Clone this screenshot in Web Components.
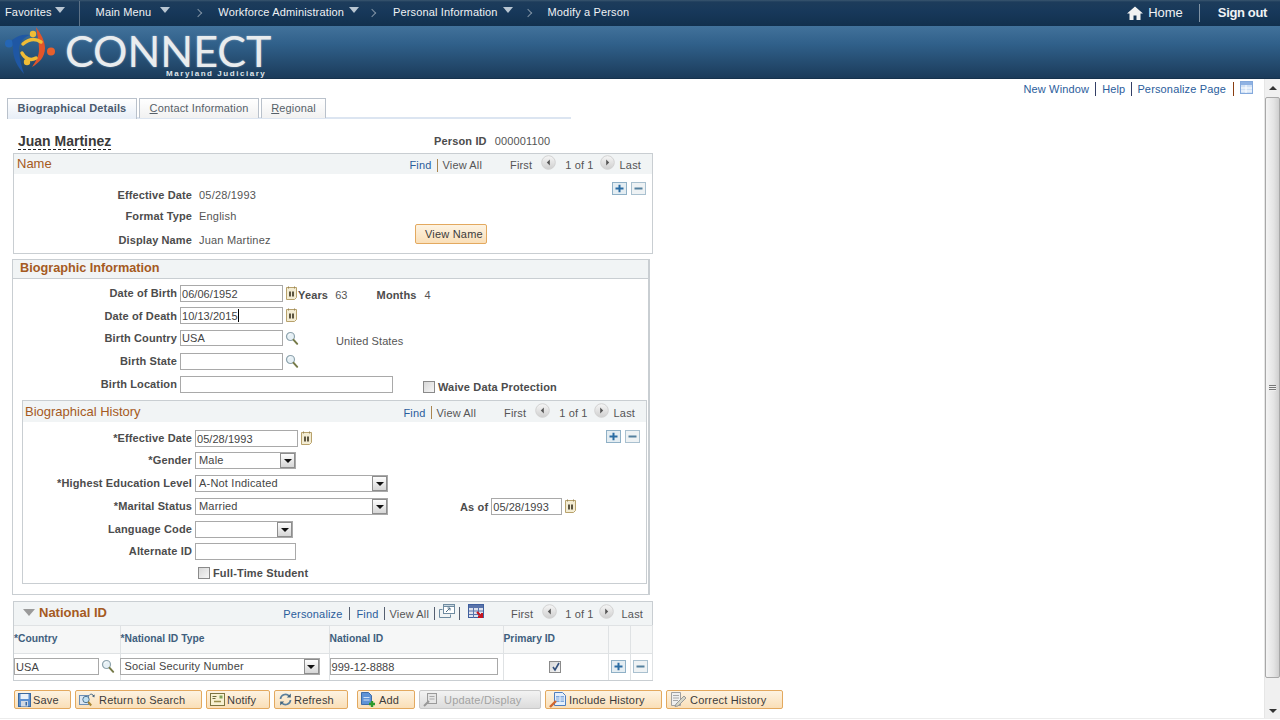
<!DOCTYPE html>
<html lang="en">
<head>
<meta charset="utf-8">
<title>Modify a Person</title>
<style>
  html, body { margin: 0; height: 720px; overflow: hidden; background: #fff; }
  body { font: 11px "Liberation Sans", Arial, sans-serif; color: #4c4c4c; display: flex; flex-direction: column; }
</style>
</head>
<body>
<cx-topnav></cx-topnav>
<cx-banner></cx-banner>
<cx-workspace>
  <cx-pagelinks></cx-pagelinks>
  <cx-tabs></cx-tabs>
  <cx-person name="Juan Martinez" person-id="000001100"></cx-person>

  <cx-group heading="Name" kind="plain" style="margin-left:13px;width:640px;height:101px">
    <cx-pager slot="controls"></cx-pager>
    <cx-namebody></cx-namebody>
  </cx-group>

  <cx-group heading="Biographic Information" kind="strong" style="margin:5px 0 0 12px;width:638px;height:336px">
    <cx-biobody></cx-biobody>
  </cx-group>

  <cx-national></cx-national>
  <cx-toolbar></cx-toolbar>
</cx-workspace>

<script>
// Small svg icons shared by the components
const ICONS = {
    calendar: `<svg width="13" height="15" viewBox="0 0 13 15"><path d="M1.500 1.500h10v10l-2 2h-8z" fill="#f3ecd3" stroke="#b8a26c"/><rect x="3" y="0.500" width="1" height="2" fill="#9a875a"/><rect x="9" y="0.500" width="1" height="2" fill="#9a875a"/><rect x="4" y="5.500" width="2" height="5" fill="#5c5540"/><rect x="7" y="5.500" width="2" height="5" fill="#5c5540"/></svg>`,
    lookup: `<svg width="14" height="15" viewBox="0 0 14 15"><circle cx="5.500" cy="5.500" r="4" fill="#e6f0f5" stroke="#8ea3ad" stroke-width="1.200"/><path d="M3.500 4.500a2.500 2.500 0 0 1 2-1.500" stroke="#fff" fill="none"/><path d="M8.600 8.800l3.600 4" stroke="#767a48" stroke-width="2" stroke-linecap="round"/></svg>`,
    prev: `<svg width="15" height="15" viewBox="0 0 15 15"><defs><linearGradient id="g" x2="0" y2="1"><stop offset="0" stop-color="#f6f6f6"/><stop offset="1" stop-color="#cfcfcf"/></linearGradient></defs><circle cx="7.500" cy="7.500" r="6.800" fill="url(#g)" stroke="#d2d2d2"/><path d="M8.800 4.500v6l-3-3z" fill="#555"/></svg>`,
    next: `<svg width="15" height="15" viewBox="0 0 15 15"><defs><linearGradient id="g2" x2="0" y2="1"><stop offset="0" stop-color="#f6f6f6"/><stop offset="1" stop-color="#cfcfcf"/></linearGradient></defs><circle cx="7.500" cy="7.500" r="6.800" fill="url(#g2)" stroke="#d2d2d2"/><path d="M6.200 4.500v6l3-3z" fill="#555"/></svg>`,
    plus: `<svg width="15" height="13" viewBox="0 0 15 13"><rect x=".5" y=".5" width="14" height="12" fill="#e4edf2" stroke="#8fb0c6"/><path d="M3.500 6.500h8M7.500 2.800v7.400" stroke="#2a6ca3" stroke-width="2"/></svg>`,
    minus: `<svg width="15" height="13" viewBox="0 0 15 13"><rect x=".5" y=".5" width="14" height="12" fill="#eef2f4" stroke="#a9c0cf"/><path d="M3.500 6.500h8" stroke="#55819f" stroke-width="2"/></svg>`,
    newwin: `<svg width="16" height="15" viewBox="0 0 16 15"><rect x="4.500" y=".5" width="11" height="9" fill="#fff" stroke="#6f8ba0"/><rect x="4.500" y=".5" width="11" height="2" fill="#c7d6e0" stroke="#6f8ba0"/><path d="M.5 5.500h3M.5 5.500v8h11v-3" fill="none" stroke="#6f8ba0"/><path d="M7 8l4-4M8.500 4H11v2.500" fill="none" stroke="#4e6d84"/></svg>`,
    grid: `<svg width="16" height="15" viewBox="0 0 16 15"><rect x=".5" y=".5" width="15" height="13" fill="#dfe3ee" stroke="#3f5f9e"/><rect x="1" y="1" width="14" height="3" fill="#5a74ab"/><path d="M5.500 1v13M10.500 1v13M1 7h14M1 10.500h14" stroke="#5a74ab"/><path d="M9 8l5 5M14 9v4h-4" fill="none" stroke="#c8141e" stroke-width="2"/></svg>`,
    pagegrid: `<svg width="13" height="13" viewBox="0 0 13 13"><rect x=".5" y=".5" width="12" height="12" fill="#cfe0f5" stroke="#84a9dc"/><rect x="1" y="1" width="11" height="3" fill="#8fb2e3"/><path d="M1 7h11M1 10h11M6 4v8" stroke="#fff"/></svg>`,
    home: `<svg width="16" height="14" viewBox="0 0 16 14"><path d="M8 .5L0 7.500h2.500V14h4V9.500h3V14h4V7.500H16z" fill="#f2f2f2"/></svg>`,
    save: `<svg width="13" height="14" viewBox="0 0 13 14"><rect x=".5" y=".5" width="12" height="13" fill="#5b8fd0" stroke="#3a689f"/><rect x="2.500" y="1" width="8" height="5" fill="#e9f0f8"/><rect x="3" y="8" width="7" height="5.500" fill="#d2d9e2"/><rect x="7.500" y="9" width="1.500" height="3.500" fill="#3a689f"/></svg>`,
    search: `<svg width="17" height="15" viewBox="0 0 17 15"><rect x=".5" y="3.500" width="9" height="9" fill="#dde7f2" stroke="#6b8fb7"/><circle cx="7" cy="7.500" r="3.200" fill="#bfe0f3" stroke="#51748f"/><path d="M9.200 10l3 3.500" stroke="#a8842f" stroke-width="2"/><path d="M10 3.500c1.500-1.800 3.500-1.800 4.500 .3" fill="none" stroke="#3f5f7d"/><path d="M15.800 2.500l-.5 3-2.400-1.500z" fill="#3f5f7d"/></svg>`,
    notify: `<svg width="15" height="13" viewBox="0 0 15 13"><rect x=".5" y=".5" width="14" height="12" fill="#f8f1d2" stroke="#7d7440"/><path d="M2.500 3.500h4M2.500 5.500h3" stroke="#6f6a3b"/><rect x="9.500" y="2.500" width="3" height="3" fill="#7fa35a"/><path d="M4 8.500h7" stroke="#9a8d4a" stroke-width="1.500"/></svg>`,
    refresh: `<svg width="15" height="15" viewBox="0 0 15 15"><path d="M2.500 7a5 5 0 0 1 8.500-3.200" fill="none" stroke="#5b7f9c" stroke-width="1.700"/><path d="M12.800 1.500v4h-4z" fill="#3f627d"/><path d="M12.500 8a5 5 0 0 1-8.500 3.200" fill="none" stroke="#5b7f9c" stroke-width="1.700"/><path d="M2.200 13.500v-4h4z" fill="#3f627d"/></svg>`,
    add: `<svg width="15" height="15" viewBox="0 0 15 15"><path d="M.5 .5h7l3 3v9H.5z" fill="#5f93d6" stroke="#3f6ca8"/><path d="M2.500 5.500h6M2.500 8h6" stroke="#cfe0f5"/><path d="M8 12h6M11 9v6" stroke="#2d9a2d" stroke-width="2.400"/></svg>`,
    update: `<svg width="15" height="15" viewBox="0 0 15 15"><rect x="4.500" y="1.500" width="9" height="10" fill="#e6e6e6" stroke="#9a9a9a"/><path d="M6.500 4.500h5M6.500 7h5" stroke="#aaa"/><path d="M1 14l5-5" stroke="#999" stroke-width="2"/></svg>`,
    include: `<svg width="18" height="17" viewBox="0 0 18 17"><path d="M5.500 1.500h8l3 3v10h-11z" fill="#e6effa" stroke="#4f7fc0"/><rect x="7" y="5" width="8" height="6" fill="#7fa8de"/><path d="M7 7h8M7 9h8M11 5v6" stroke="#e6effa"/><path d="M1 16l6-6" stroke="#d0662f" stroke-width="2.400"/></svg>`,
    correct: `<svg width="17" height="17" viewBox="0 0 17 17"><path d="M1.500 1.500h9v13h-9z" fill="#efefef" stroke="#a0a0a0"/><path d="M3 4.500h6M3 7h6M3 9.500h5" stroke="#a8a8a8"/><path d="M6 13l8-8 2 2-8 8-3 .5z" fill="#d6d6c8" stroke="#999"/></svg>`
};

// Base class: subclasses only supply css() and html()
class CxElement extends HTMLElement {
    connectedCallback() {
        if (!this.shadowRoot) this.attachShadow({ mode: 'open' });
        this.shadowRoot.innerHTML = `<style>${this.css()}</style>${this.html()}`;
    }
    css() { return ':host{display:block}'; }
    html() { return '<slot></slot>'; }
}

class CxIcon extends CxElement {
    css() { return ':host{display:inline-flex;flex:none;line-height:0}'; }
    html() { return ICONS[this.getAttribute('name')] || ''; }
}

class CxTopnav extends CxElement {
    css() { return `
        :host{display:flex;align-items:center;height:26px;flex:none;color:#f0f2f4;font-size:11px;letter-spacing:.15px;
            background:linear-gradient(#3a566f 0,#1d3c5b 2px,#17385a 12px,#12304d 100%);white-space:nowrap}
        span{margin-top:-3px}
        .arr{width:0;height:0;border:5.500px solid transparent;border-top:6px solid #b9c6d2;border-bottom:0;margin-top:-6px}
        .chev{width:5px;height:5px;border:solid #7f92a4;border-width:1px 1px 0 0;transform:rotate(45deg);margin-top:-1px}
        .sep{width:1px;height:25px;background:#5c7186;margin-left:14px}
        .right{margin-left:auto;display:flex;align-items:center;font-size:13px;letter-spacing:0}
        .right span{margin-top:-1px}
        .rsep{width:1px;height:18px;background:#7f92a4;margin:0 18px 0 16px}
        b{margin-right:13px;letter-spacing:-.35px;margin-top:-2px}
    `; }
    html() { return `
        <span style="margin-left:5px">Favorites</span><i class="arr" style="margin-left:3px"></i><i class="sep"></i>
        <span style="margin-left:16px">Main Menu</span><i class="arr" style="margin-left:9px"></i>
        <i class="chev" style="margin-left:25px"></i><span style="margin-left:17px">Workforce Administration</span><i class="arr" style="margin-left:5px"></i>
        <i class="chev" style="margin-left:10px"></i><span style="margin-left:18px">Personal Information</span><i class="arr" style="margin-left:5px"></i>
        <i class="chev" style="margin-left:12px"></i><span style="margin-left:17px">Modify a Person</span>
        <div class="right"><cx-icon name="home"></cx-icon><span style="margin-left:5px">Home</span><i class="rsep"></i><b>Sign out</b></div>
    `; }
}

class CxBanner extends CxElement {
    css() { return `
        :host{display:block;height:53px;flex:none;position:relative;overflow:hidden;box-sizing:border-box;border-bottom:1px solid #16324c;
            background:linear-gradient(#42729b,#30608a 35%,#1b3b5a 100%)}
        svg{position:absolute;left:3px;top:0}
        .name{position:absolute;left:65px;top:6px;font:400 43px/38px Lato,"Open Sans",sans-serif;color:#e9ecee;text-shadow:0 0 2px rgba(255,255,255,.45)}
        .sub{position:absolute;left:166px;top:44px;font:bold 8px/8px "Liberation Sans",sans-serif;letter-spacing:1.550px;color:#dfe5ea}
    `; }
    html() { return `
        <svg width="56" height="50" viewBox="0 0 56 50" fill="none">
            <circle cx="6" cy="17.500" r="4" fill="#2566b5"/>
            <path d="M9 14c6-5 12-6 18-5-8 3-12 9-11 17 1 9 3 15 5 22-7-8-11-16-11-25 0-3-.5-6-1-9z" fill="#1f57a4"/>
            <path d="M33 1c5 7 9 14 9 21 0 9-6 15-13 19 4-6 7-11 7-18 0-8-2-15-3-22z" fill="#e2552a"/>
            <circle cx="48" cy="25.500" r="4" fill="#e8602c"/>
            <path d="M20 18c6-5 12-6 18-2" stroke="#f0bc36" stroke-width="3.500" stroke-linecap="round"/>
            <circle cx="30" cy="8" r="3.200" fill="#f0bc36"/>
            <path d="M19 27c3 6 9 8 14 5" stroke="#f0bc36" stroke-width="3.500" stroke-linecap="round"/>
            <circle cx="24" cy="36" r="3.200" fill="#f0bc36"/>
        </svg>
        <div class="name">CONNECT</div>
        <div class="sub">Maryland Judiciary</div>
    `; }
}

class CxWorkspace extends CxElement {
    css() { return `
        :host{display:flex;flex:none;height:640px;box-sizing:border-box;border-bottom:1px solid #ececec}
        main{flex:1;min-width:0}
        .bar{width:16px;height:639px;background:#f0f0f0;border-left:1px solid #e6e6e6;box-sizing:border-box;display:flex;flex-direction:column;align-items:center;position:relative}
        .up,.down{width:0;height:0;border:4px solid transparent}
        .up{border-bottom:4px solid #333;border-top:0;margin-top:7px}
        .down{border-top:4px solid #333;border-bottom:0;margin:auto 0 5px}
        .thumb{position:absolute;top:18px;left:0;width:15px;height:581px;box-sizing:border-box;border:1px solid #a8a8a8;border-radius:2px;
            background:linear-gradient(90deg,#f4f4f4,#e4e4e4 60%,#cfcfcf);display:flex;align-items:center;justify-content:center}
        .grip{width:7px;height:6px;background:repeating-linear-gradient(#777 0 1px,#eee 1px 2px)}
    `; }
    html() { return `<main><slot></slot></main><div class="bar"><i class="up"></i><div class="thumb"><i class="grip"></i></div><i class="down"></i></div>`; }
}

class CxPagelinks extends CxElement {
    css() { return `
        :host{display:flex;justify-content:flex-end;align-items:center;height:19px;padding-right:11px;color:#2b5d9c;letter-spacing:.15px}
        i{width:1px;height:14px;margin:0 6px;background:#333f66}
        .icon{margin-bottom:2px}
    `; }
    html() { return `<span>New Window</span><i></i><span>Help</span><i></i><span style="margin-left:-1px">Personalize Page</span><i style="background:#8a3d10;margin-left:7px"></i><cx-icon class="icon" name="pagegrid"></cx-icon>`; }
}

class CxTabs extends CxElement {
    css() { return `
        :host{display:block;height:21px;box-sizing:border-box;margin-left:7px;width:564px;border-bottom:2px solid #dce5f1}
        nav{display:flex;gap:2px;height:20px}
        span{display:flex;align-items:center;justify-content:center;box-sizing:border-box;height:20px;border:1px solid #b9c1cb;border-bottom:0;padding-bottom:1px;
            color:#565f68;letter-spacing:.15px;background:linear-gradient(#fff,#f1f1f1)}
        .on{font-weight:bold;color:#4a5a6e;background:linear-gradient(#fff,#e7eef7);height:21px;padding-bottom:3px}
    `; }
    html() { return `<nav><span class="on" style="width:130px">Biographical Details</span><span style="width:120px"><u>C</u>ontact Information</span><span style="width:65px"><u>R</u>egional</span></nav>`; }
}

class CxPerson extends CxElement {
    css() { return `
        :host{display:flex;height:34px;align-items:flex-start;padding:14px 0 0 18px;box-sizing:border-box}
        b.n{font-size:14px;line-height:16px;height:16px;width:416px}
        span.u{border-bottom:1px dashed #222;color:#3a3a3a;display:inline-block;height:16px}
        .p{margin-top:2px;letter-spacing:.15px}
        .v{margin-left:8px;color:#555;letter-spacing:.15px;margin-top:2px}
    `; }
    html() { return `<b class="n"><span class="u">${this.getAttribute('name')}</span></b><b class="p">Person ID</b><span class="v">${this.getAttribute('person-id')}</span>`; }
}

class CxPager extends CxElement {
    css() { return `
        :host{display:flex;align-items:center;font-size:11px;letter-spacing:.15px;color:#555;white-space:nowrap;margin-top:2px}
        a{color:#2b5d9c}
        i{width:1px;height:13px;background:#a9854f;margin:0 5px}
        cx-icon{margin-top:-5px}
    `; }
    html() {
        return `<a>Find</a><i></i><span>View All</span>
        <span style="margin-left:28px">First</span><cx-icon name="prev" style="margin-left:9px"></cx-icon>
        <span style="margin-left:9px">1 of 1</span><cx-icon name="next" style="margin-left:6px"></cx-icon>
        <span style="margin-left:5px">Last</span>`;
    }
}

class CxGroup extends CxElement {
    css() {
        const strong = this.getAttribute('kind') === 'strong';
        const inner = this.getAttribute('kind') === 'inner';
        return `
        :host{display:block;box-sizing:border-box;border:1px solid #c9ced2;${strong ? 'border-right-width:2px;' : ''}}
        header{display:flex;align-items:center;justify-content:space-between;box-sizing:border-box;background:#f1f4f5;
            height:${strong ? 19 : inner ? 21 : 20}px;padding:0 11px 0 ${strong ? 7 : inner ? 2 : 3}px;${strong ? 'border-bottom:1px solid #c9ced2;' : ''}}
        h2{margin:${strong ? '-2px' : '-1px'} 0 0;font-size:${strong ? 12.700 : 13}px;font-weight:${strong ? 'bold' : 'normal'};color:#a55a22}
        `;
    }
    html() {
        return `<header><h2>${this.getAttribute('heading')}</h2><slot name="controls"></slot></header><slot></slot>`;
    }
}

class CxRow extends CxElement {
    css() { return `
        :host{display:flex;align-items:flex-start;height:var(--row-h,23px);white-space:nowrap}
        label{width:var(--label-w,164px);flex:none;text-align:right;font-weight:bold;color:#4c4c4c;letter-spacing:.12px;margin:var(--label-top,0) 3px 0 0;line-height:16px}
    `; }
    html() { return `<label>${this.getAttribute('label')}</label><slot></slot>`; }
}

class CxInput extends CxElement {
    css() { return `
        :host{display:inline-flex;align-items:center;box-sizing:border-box;height:var(--h,17px);flex:none;border:1px solid #a9a9a9;background:#fff;padding-left:1px;
            color:#444;font-size:11px;letter-spacing:.05px;overflow:hidden}
        i{width:1px;height:13px;background:#000}
    `; }
    html() { return `<span>${this.getAttribute('value') || ''}</span>${this.hasAttribute('caret') ? '<i></i>' : ''}`; }
}

class CxSelect extends CxElement {
    css() { return `
        :host{display:inline-flex;align-items:center;justify-content:space-between;box-sizing:border-box;height:17px;flex:none;border:1px solid #a9a9a9;background:#fff;padding-left:3px;color:#444;letter-spacing:.2px}
        span{margin-top:-1px}
        b{width:15px;height:15px;box-sizing:border-box;border:1px solid #8d8d8d;background:linear-gradient(#fdfdfd,#d6d6d6);display:flex;align-items:center;justify-content:center}
        b::after{content:"";border:4px solid transparent;border-top:4px solid #111;border-bottom:0}
    `; }
    html() { return `<span>${this.getAttribute('value') || ''}</span><b></b>`; }
}

class CxCheck extends CxElement {
    css() { return `
        :host{display:inline-flex;align-items:center;gap:3px;font-weight:bold;letter-spacing:.15px}
        i{width:12px;height:12px;box-sizing:border-box;border:1px solid #8a8a8a;background:linear-gradient(135deg,#d8d8d8,#f6f6f6);display:block;position:relative}
        svg{position:absolute;left:1px;top:0}
    `; }
    html() {
        const tick = this.hasAttribute('checked') ? '<svg width="10" height="10" viewBox="0 0 10 10"><path d="M2 5l2 3 4-7" fill="none" stroke="#33507c" stroke-width="1.600"/></svg>' : '';
        return `<i>${tick}</i><slot></slot>`;
    }
}

class CxButton extends CxElement {
    css() {
        const off = this.hasAttribute('disabled');
        return `
        :host{display:inline-flex;align-items:center;box-sizing:border-box;height:var(--h,19px);flex:none;border:1px solid ${off ? '#c8c8c8' : '#e3a95f'};border-radius:2px;
            background:${off ? 'linear-gradient(#f3f3f3,#dcdcdc)' : 'linear-gradient(#fdf3e2,#fadfb8)'};color:${off ? '#a2a2a2' : '#3c3c3c'};letter-spacing:.2px;white-space:nowrap;
            padding-left:${this.getAttribute('pad') || 3}px}
        span{margin-left:${this.getAttribute('gap') || 3}px}
        `;
    }
    html() {
        const icon = this.getAttribute('icon');
        return `${icon ? `<cx-icon name="${icon}"></cx-icon>` : ''}<span><slot></slot></span>`;
    }
}

class CxNamebody extends CxElement {
    css() { return `
        :host{display:grid;grid-template-columns:401px 72px 1fr;height:79px;--label-w:178px}
        .rows{padding-top:13px}
        .rows span{color:#555;line-height:16px;letter-spacing:.2px;margin-left:4px}
        .side{display:flex;justify-content:flex-end;gap:4px;padding:8px 6px 0 0}
        cx-button{margin-top:50px;--h:20px}
    `; }
    html() { return `
        <div class="rows">
            <cx-row label="Effective Date" style="--row-h:21px"><span>05/28/1993</span></cx-row>
            <cx-row label="Format Type" style="--row-h:24px"><span>English</span></cx-row>
            <cx-row label="Display Name"><span>Juan Martinez</span></cx-row>
        </div>
        <cx-button pad="9" gap="0" style="width:72px">View Name</cx-button>
        <div class="side"><cx-icon name="plus"></cx-icon><cx-icon name="minus"></cx-icon></div>
    `; }
}

class CxBiobody extends CxElement {
    css() { return `
        :host{display:block;padding-top:6px;--label-w:164px}
        cx-icon.c{margin:1px 0 0 2px}
        b{font-weight:bold;letter-spacing:.15px;line-height:18px}
        .v{color:#555;line-height:18px;letter-spacing:.1px}
        .hrows{--label-w:169px;padding-top:8px;position:relative}
        .am{position:absolute;right:6px;top:8px;display:flex;gap:4px}
        cx-group{margin:1px 0 0 9px;width:625px;height:184px}
    `; }
    html() { return `
        <cx-row label="Date of Birth" style="--row-h:22px"><cx-input value="06/06/1952" style="width:103px"></cx-input><cx-icon class="c" name="calendar"></cx-icon>
            <b style="margin-left:0;margin-top:1px">Years</b><span class="v" style="margin:1px 0 0 7px">63</span><b style="margin:1px 0 0 29px">Months</b><span class="v" style="margin:1px 0 0 8px">4</span></cx-row>
        <cx-row label="Date of Death" style="--label-top:1px"><cx-input value="10/13/2015" caret style="width:103px"></cx-input><cx-icon class="c" name="calendar"></cx-icon></cx-row>
        <cx-row label="Birth Country"><cx-input value="USA" style="width:103px;--h:16px"></cx-input><cx-icon class="c" name="lookup"></cx-icon><span class="v" style="margin:2px 0 0 37px">United States</span></cx-row>
        <cx-row label="Birth State"><cx-input style="width:103px"></cx-input><cx-icon class="c" name="lookup"></cx-icon></cx-row>
        <cx-row label="Birth Location"><cx-input style="width:213px"></cx-input><cx-check style="margin:2px 0 0 30px;height:17px">Waive Data Protection</cx-check></cx-row>
        <cx-group heading="Biographical History" kind="inner">
            <cx-pager slot="controls"></cx-pager>
            <div class="hrows">
                <div class="am"><cx-icon name="plus"></cx-icon><cx-icon name="minus"></cx-icon></div>
                <cx-row label="*Effective Date" style="--row-h:22px"><cx-input value="05/28/1993" style="width:103px"></cx-input><cx-icon class="c" name="calendar"></cx-icon></cx-row>
                <cx-row label="*Gender"><cx-select value="Male" style="width:101px"></cx-select></cx-row>
                <cx-row label="*Highest Education Level"><cx-select value="A-Not Indicated" style="width:193px"></cx-select></cx-row>
                <cx-row label="*Marital Status"><cx-select value="Married" style="width:193px"></cx-select><b style="margin-left:72px">As of</b><cx-input value="05/28/1993" style="width:71px;margin-left:3px"></cx-input><cx-icon class="c" name="calendar"></cx-icon></cx-row>
                <cx-row label="Language Code" style="--row-h:22px"><cx-select style="width:98px"></cx-select></cx-row>
                <cx-row label="Alternate ID" style="--row-h:22px"><cx-input style="width:101px"></cx-input></cx-row>
                <cx-row label="" style="--row-h:16px"><cx-check style="margin:2px 0 0 3px">Full-Time Student</cx-check></cx-row>
            </div>
        </cx-group>
    `; }
}

class CxNational extends CxElement {
    css() { return `
        :host{display:block;box-sizing:border-box;margin:6px 0 0 13px;width:640px;height:80px;border:1px solid #c9ced2}
        header{display:flex;align-items:center;height:23px;background:#f1f4f5;padding:0 9px 0 9px;box-sizing:border-box}
        .tri{width:0;height:0;border:6px solid transparent;border-top:7px solid #9a9a9a;border-bottom:0;margin:-3px 4px 0 0}
        h2{margin:-3px 0 0;font-size:13px;color:#a55a22;flex:1}
        .ctl{display:flex;align-items:center;color:#555;letter-spacing:.15px}
        .ctl a{color:#2b5d9c}
        .ctl i{width:1px;height:13px;background:#555f70;margin:0 5px}
        .ctl cx-icon{margin-top:-4px}
        table{border-collapse:collapse;table-layout:fixed;width:638px}
        th{height:28px;padding:0 0 3px 0;text-align:left;font-size:10.300px;color:#3f5f7e;background:#f6f7f7;border:1px solid #dfe2e4;border-width:1px 1px 1px 0;box-sizing:border-box}
        td{height:26px;padding:0;border-right:1px solid #dfe2e4;box-sizing:border-box}
        .f{display:flex;align-items:center}
        .c{justify-content:center;padding-right:2px}
    `; }
    html() { return `
        <header><i class="tri"></i><h2>National ID</h2>
            <div class="ctl"><a>Personalize</a><i style="margin:0 7px 0 6px"></i><a>Find</a><i></i><span>View All</span><i style="margin:0 4px 0 5px"></i><cx-icon name="newwin"></cx-icon><i style="margin-left:4px"></i><cx-icon name="grid" style="margin-left:3px"></cx-icon>
            <span style="margin-left:27px">First</span><cx-icon name="prev" style="margin-left:9px"></cx-icon><span style="margin-left:8px">1 of 1</span><cx-icon name="next" style="margin-left:5px"></cx-icon><span style="margin-left:8px">Last</span></div>
        </header>
        <table>
            <colgroup><col style="width:106px"><col style="width:209px"><col style="width:174px"><col style="width:105px"><col style="width:22px"><col style="width:22px"></colgroup>
            <tr><th>*Country</th><th>*National ID Type</th><th>National ID</th><th>Primary ID</th><th></th><th></th></tr>
            <tr>
                <td><div class="f"><cx-input value="USA" style="width:85px"></cx-input><cx-icon name="lookup" style="margin-left:2px"></cx-icon></div></td>
                <td><div class="f" style="margin-left:-1px"><cx-select value="Social Security Number" style="width:200px;padding-left:4px"></cx-select></div></td>
                <td><cx-input value="999-12-8888" style="width:168px"></cx-input></td>
                <td><div class="f c"><cx-check checked></cx-check></div></td>
                <td><div class="f c"><cx-icon name="plus"></cx-icon></div></td>
                <td><div class="f c"><cx-icon name="minus"></cx-icon></div></td>
            </tr>
        </table>
    `; }
}

class CxToolbar extends CxElement {
    css() { return `:host{display:flex;gap:4px;margin:9px 0 0 14px;height:20px}`; }
    html() { return `
        <cx-button icon="save" gap="2" style="width:57px">Save</cx-button>
        <cx-button icon="search" gap="3" style="width:127px">Return to Search</cx-button>
        <cx-button icon="notify" gap="2" style="width:64px">Notify</cx-button>
        <cx-button icon="refresh" gap="1" style="width:74px">Refresh</cx-button>
        <cx-button icon="add" gap="3" style="width:58px;margin-left:5px">Add</cx-button>
        <cx-button icon="update" gap="6" disabled style="width:122px">Update/Display</cx-button>
        <cx-button icon="include" gap="2" style="width:117px">Include History</cx-button>
        <cx-button icon="correct" gap="3" style="width:117px">Correct History</cx-button>
    `; }
}

customElements.define('cx-icon', CxIcon);
customElements.define('cx-topnav', CxTopnav);
customElements.define('cx-banner', CxBanner);
customElements.define('cx-workspace', CxWorkspace);
customElements.define('cx-pagelinks', CxPagelinks);
customElements.define('cx-tabs', CxTabs);
customElements.define('cx-person', CxPerson);
customElements.define('cx-pager', CxPager);
customElements.define('cx-group', CxGroup);
customElements.define('cx-row', CxRow);
customElements.define('cx-input', CxInput);
customElements.define('cx-select', CxSelect);
customElements.define('cx-check', CxCheck);
customElements.define('cx-button', CxButton);
customElements.define('cx-namebody', CxNamebody);
customElements.define('cx-biobody', CxBiobody);
customElements.define('cx-national', CxNational);
customElements.define('cx-toolbar', CxToolbar);
</script>
</body>
</html>
